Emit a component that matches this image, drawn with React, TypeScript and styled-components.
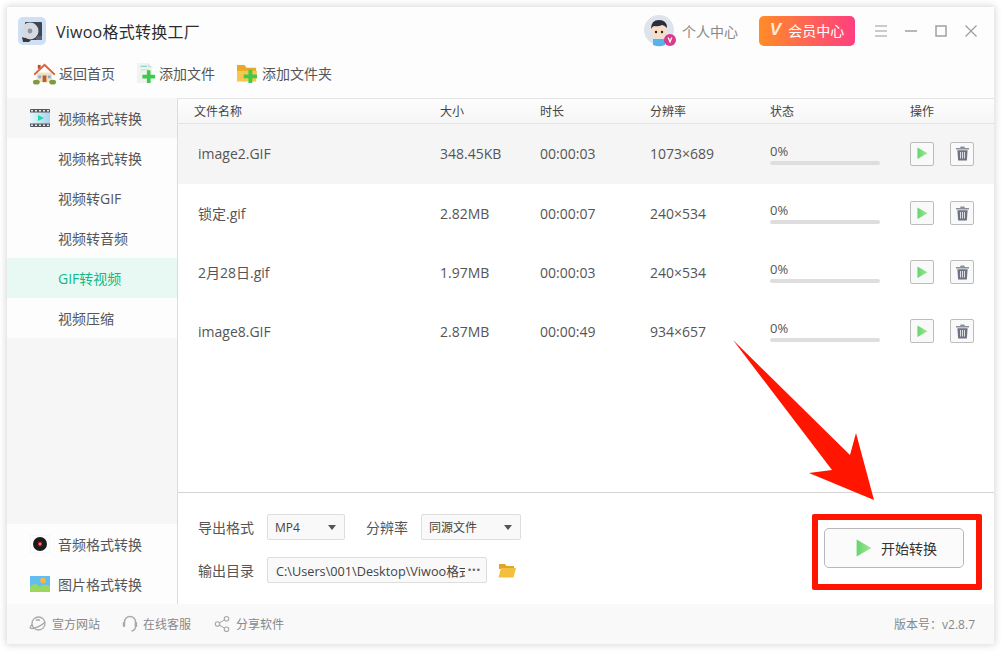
import React from 'react';
import styled, { createGlobalStyle } from 'styled-components';
import { Share2 } from 'lucide-react';

const files = [
    { name: 'image2.GIF', size: '348.45KB', time: '00:00:03', res: '1073×689' },
    { name: '锁定.gif', size: '2.82MB', time: '00:00:07', res: '240×534' },
    { name: '2月28日.gif', size: '1.97MB', time: '00:00:03', res: '240×534' },
    { name: 'image8.GIF', size: '2.87MB', time: '00:00:49', res: '934×657' },
];

const subItems = ['视频格式转换', '视频转GIF', '视频转音频', 'GIF转视频', '视频压缩'];

const Logo = () => (
    <svg width="28" height="28" viewBox="0 0 28 28">
        <rect width="28" height="28" rx="5" fill="#cfe0f5" />
        <rect x="7" y="5" width="17" height="18" rx="1" fill="#3c4654" />
        <circle cx="12" cy="14" r="8.5" fill="#d5d9e0" />
        <circle cx="12" cy="14" r="2.4" fill="#8d96a5" />
        <path d="M4 20l9 3-2 2H5z" fill="#3a3a3a" />
        <path d="M18 19h6v4h-6z" fill="#59616e" />
    </svg>
);

const HomeIcon = () => (
    <svg width="23" height="23" viewBox="0 0 24 24">
        <path d="M5 3h3v4H5z" fill="#c9492b" />
        <path d="M4 11h16v10H4z" fill="#f6dfc0" />
        <path d="M0.5 12.5L12 1.5l11.5 11-1.5 1.4L12 4.5 2 13.9z" fill="#d9663a" />
        <path d="M10 14h4v7h-4z" fill="#b2622c" />
        <path d="M5.5 14h3v3h-3zM15.500 14h3v3h-3z" fill="#7fb3d5" />
        <ellipse cx="3.5" cy="21" rx="3.5" ry="2.4" fill="#7d9b3c" />
        <ellipse cx="20.5" cy="21" rx="3.5" ry="2.4" fill="#7d9b3c" />
    </svg>
);

const GreenPlus = () => (
    <path d="M9 6h4v5h5v4h-5v5H9v-5H4v-4h5z" fill="#3ecb4c" />
);

const AddFileIcon = () => (
    <svg width="20" height="22" viewBox="0 0 22 24">
        <path d="M1 1h12l5 5v17H1z" fill="#f1f3f3" />
        <path d="M13 1l5 5h-5z" fill="#dcdfdf" />
        <path d="M5 4h7v1.2H5z" fill="#5fd8b8" />
        <path d="M5 8h9v1H5z" fill="#cfd4d4" />
        <g transform="translate(3 3)">
            <GreenPlus />
        </g>
    </svg>
);

const AddFolderIcon = () => (
    <svg width="23" height="21" viewBox="0 0 24 22">
        <path d="M1 2h8l2 3h10v14H1z" fill="#e9a825" />
        <path d="M1 8h21l-1 11H1z" fill="#f8c64c" />
        <g transform="translate(4 1)">
            <GreenPlus />
        </g>
    </svg>
);

const FilmIcon = () => (
    <svg width="20" height="18" viewBox="0 0 20 18">
        <defs>
            <linearGradient id="film" x1="0" x2="1" y1="0" y2="0">
                <stop offset="0" stopColor="#e4f6fb" />
                <stop offset="1" stopColor="#a9d3ef" />
            </linearGradient>
        </defs>
        <rect width="20" height="18" fill="#55595c" rx="1" />
        <rect y="3.5" width="20" height="11" fill="url(#film)" />
        <path d="M1 1h2v1.4H1zM5 1h2v1.4H5zM9 1h2v1.4H9zM13 1h2v1.4h-2zM17 1h2v1.4h-2zM1 15.6h2V17H1zM5 15.6h2V17H5zM9 15.6h2V17H9zM13 15.6h2V17h-2zM17 15.6h2V17h-2z" fill="#e8e8e8" />
        <path d="M8 6l6 3-6 3z" fill="#1fd9a0" />
    </svg>
);

const DiscIcon = () => (
    <svg width="20" height="18" viewBox="0 0 20 18">
        <rect width="20" height="18" fill="#fdfdfd" stroke="#f0f0f0" />
        <circle cx="10" cy="9" r="7" fill="#1b1b1b" />
        <circle cx="10" cy="9" r="2.2" fill="#d8232a" />
        <circle cx="10" cy="9" r="0.7" fill="#fff" />
    </svg>
);

const PictureIcon = () => (
    <svg width="20" height="16" viewBox="0 0 20 16">
        <rect width="20" height="16" fill="#62bdf2" />
        <circle cx="13" cy="4.5" r="2.8" fill="#f8b93b" />
        <path d="M0 11q5-6 10 0 3-4 10-1v6H0z" fill="#9bd65f" />
    </svg>
);

const Avatar = () => (
    <svg width="32" height="32" viewBox="0 0 32 32">
        <circle cx="15" cy="15" r="15" fill="#dfe4ea" />
        <path d="M9 24h12v6a15 15 0 0 1-12 0z" fill="#58b4e8" />
        <ellipse cx="15" cy="16" rx="7" ry="7.5" fill="#fbdcc6" />
        <path d="M7 14q0-9 8-9t8 8q-3-3-5-3-4 2-8 1-2 1-3 3z" fill="#2b2d3a" />
        <circle cx="12" cy="17" r="1.2" fill="#222" />
        <circle cx="18" cy="17" r="1.2" fill="#222" />
        <circle cx="26" cy="25" r="6" fill="#d93a8a" />
        <path d="M23.5 22.5l2.5 6 2.5-6h-1.5l-1 3-1-3z" fill="#fff" />
    </svg>
);

const PlayIcon = ({ size }: { size: number }) => (
    <svg width={size} height={size * 1.13} viewBox="0 0 14 16">
        <defs>
            <linearGradient id={`play${size}`} x1="0" x2="1" y1="0" y2="0">
                <stop offset="0" stopColor="#63d56b" />
                <stop offset="1" stopColor="#a3e69a" />
            </linearGradient>
        </defs>
        <path d="M0.5 0.5L13.5 8 0.5 15.5z" fill={`url(#play${size})`} />
    </svg>
);

const TrashIcon = () => (
    <svg width="13" height="15" viewBox="0 0 14 16">
        <path d="M5 0.5h4l.6 1.5H14v1.6H0V2h4.4z" fill="#8a8f9a" />
        <path d="M1.5 4.5h11l-.8 11H2.3z" fill="#6d7384" />
        <path d="M4.4 6.5h1v7h-1zM6.5 6.5h1v7h-1zM8.6 6.5h1v7h-1z" fill="#e8e8ec" />
    </svg>
);

const PlanetIcon = () => (
    <svg width="18" height="18" viewBox="0 0 18 18" fill="none" stroke="#a9a9a9" strokeWidth="1.3">
        <circle cx="9.5" cy="8.5" r="6.5" />
        <path d="M3 9.5c-2 2.500-3 4 0 4 3 0 10-3 12.500-6" />
        <path d="M7 5.500q2-1.500 4 0" />
    </svg>
);

const HeadsetIcon = () => (
    <svg width="16" height="18" viewBox="0 0 16 18" fill="none" stroke="#a9a9a9" strokeWidth="1.4">
        <path d="M2.500 8V7a5.500 5.500 0 0 1 11 0v5q0 3-4 4" />
        <rect x="0.800" y="7" width="2.400" height="5" rx="1" fill="#a9a9a9" stroke="none" />
        <rect x="12.800" y="7" width="2.400" height="5" rx="1" fill="#a9a9a9" stroke="none" />
    </svg>
);

const FolderIcon = () => (
    <svg width="18" height="15" viewBox="0 0 18 15">
        <path d="M1 1h6l1.500 2H16v3H1z" fill="#e3a32a" />
        <path d="M3 5h15l-2.500 9.500H0.500z" fill="#f5bf3e" />
    </svg>
);

const Caret = () => (
    <svg width="8" height="5" viewBox="0 0 8 5">
        <path d="M0 0h8L4 5z" fill="#555" />
    </svg>
);

const App: React.FC = () => {
    return (
        <Page>
            <GlobalStyle />
            <Window>
                <TitleBar>
                    <Logo />
                    <AppName>Viwoo格式转换工厂</AppName>
                    <Account>
                        <Avatar />
                        <span>个人中心</span>
                    </Account>
                    <VipButton>
                        <VMark>V</VMark>
                        会员中心
                    </VipButton>
                    <Controls>
                        <svg width="12" height="12" viewBox="0 0 12 12" stroke="#999" strokeWidth="1.2">
                            <path d="M0 1h12M0 6h12M0 11h12" />
                        </svg>
                        <svg width="12" height="12" viewBox="0 0 12 12" stroke="#999" strokeWidth="1.4">
                            <path d="M0 6h12" />
                        </svg>
                        <svg width="12" height="12" viewBox="0 0 12 12" stroke="#999" strokeWidth="1.4" fill="none">
                            <rect x="1" y="1" width="10" height="10" />
                        </svg>
                        <svg width="12" height="12" viewBox="0 0 12 12" stroke="#999" strokeWidth="1.1">
                            <path d="M0.500 0.500l11 11M11.500 0.500l-11 11" />
                        </svg>
                    </Controls>
                </TitleBar>

                <Toolbar>
                    <ToolItem>
                        <HomeIcon />
                        返回首页
                    </ToolItem>
                    <ToolItem>
                        <AddFileIcon />
                        添加文件
                    </ToolItem>
                    <ToolItem>
                        <AddFolderIcon />
                        添加文件夹
                    </ToolItem>
                </Toolbar>

                <Body>
                    <Sidebar>
                        <GroupHead $tinted>
                            <IconSlot>
                                <FilmIcon />
                            </IconSlot>
                            视频格式转换
                        </GroupHead>
                        {subItems.map(item => (
                            <SubItem key={item} $active={item === 'GIF转视频'}>
                                {item}
                            </SubItem>
                        ))}
                        <SideFill />
                        <GroupHead>
                            <IconSlot>
                                <DiscIcon />
                            </IconSlot>
                            音频格式转换
                        </GroupHead>
                        <GroupHead>
                            <IconSlot>
                                <PictureIcon />
                            </IconSlot>
                            图片格式转换
                        </GroupHead>
                    </Sidebar>

                    <Main>
                        <HeadRow>
                            <HeadCell $first>文件名称</HeadCell>
                            <HeadCell>大小</HeadCell>
                            <HeadCell>时长</HeadCell>
                            <HeadCell>分辨率</HeadCell>
                            <HeadCell>状态</HeadCell>
                            <HeadCell>操作</HeadCell>
                        </HeadRow>
                        <FileList>
                            {files.map((f, i) => (
                                <FileRow key={f.name} $selected={i === 0}>
                                    <NameCell>{f.name}</NameCell>
                                    <span>{f.size}</span>
                                    <span>{f.time}</span>
                                    <span>{f.res}</span>
                                    <Status>
                                        <Percent>0%</Percent>
                                        <Track />
                                    </Status>
                                    <Actions>
                                        <SquareButton>
                                            <PlayIcon size={11} />
                                        </SquareButton>
                                        <SquareButton>
                                            <TrashIcon />
                                        </SquareButton>
                                    </Actions>
                                </FileRow>
                            ))}
                        </FileList>

                        <OutputPanel>
                            <Options>
                                <OptionRow>
                                    <FieldLabel>导出格式</FieldLabel>
                                    <Select $width={78}>
                                        MP4
                                        <Caret />
                                    </Select>
                                    <SecondLabel>分辨率</SecondLabel>
                                    <Select $width={100}>
                                        同源文件
                                        <Caret />
                                    </Select>
                                </OptionRow>
                                <OptionRow>
                                    <FieldLabel>输出目录</FieldLabel>
                                    <PathBox>
                                        <PathText>C:\Users\001\Desktop\Viwoo格式</PathText>
                                        <Dots>•••</Dots>
                                    </PathBox>
                                    <FolderSlot>
                                        <FolderIcon />
                                    </FolderSlot>
                                </OptionRow>
                            </Options>
                            <StartButton>
                                <PlayIcon size={16} />
                                开始转换
                            </StartButton>
                        </OutputPanel>
                    </Main>
                </Body>

                <Footer>
                    <FootLink>
                        <PlanetIcon />
                        宣方网站
                    </FootLink>
                    <FootLink>
                        <HeadsetIcon />
                        在线客服
                    </FootLink>
                    <FootLink>
                        <Share2 size={18} color="#a9a9a9" strokeWidth={1.5} />
                        分享软件
                    </FootLink>
                    <Version>版本号：v2.8.7</Version>
                </Footer>
            </Window>

            <RedFrame />
            <Arrow viewBox="0 0 150 170" width="150" height="170">
                <path d="M1 0L118 115L124 93L142 160L77 133L100 130z" fill="#ff1500" />
            </Arrow>
        </Page>
    );
};

const GlobalStyle = createGlobalStyle`
    html, body {
        margin: 0;
        background: #fff;
    }

    body {
        font-family: "Open Sans", "Noto Sans CJK SC", sans-serif;
        font-size: 14px;
        color: #555;
    }
`;

const Page = styled.div`
    position: relative;
    width: 1002px;
    height: 652px;
    padding: 7px 8px 8px 7px;
    box-sizing: border-box;
    overflow: hidden;
`;

const Window = styled.div`
    width: 100%;
    height: 100%;
    display: flex;
    flex-direction: column;
    background: #fdfdfd;
    box-shadow: 0 0 7px 1px rgba(0, 0, 0, 0.16);
`;

const TitleBar = styled.div`
    height: 45px;
    display: flex;
    align-items: center;
    padding: 2px 17px 0 11px;
    box-sizing: border-box;
`;

const AppName = styled.div`
    margin-left: 10px;
    font-size: 16px;
    letter-spacing: 0.25px;
    color: #2c2c2c;
    flex: 1;
`;

const Account = styled.div`
    display: flex;
    align-items: center;
    gap: 6px;
    color: #888;
`;

const VipButton = styled.div`
    width: 96px;
    height: 30px;
    margin-left: 21px;
    padding-bottom: 2px;
    box-sizing: border-box;
    display: flex;
    align-items: center;
    justify-content: center;
    gap: 7px;
    border-radius: 5px;
    color: #fff;
    background: linear-gradient(90deg, #ff8c27, #ff3f80);
`;

const VMark = styled.span`
    font-family: "Liberation Sans", sans-serif;
    font-weight: 700;
    font-style: italic;
    font-size: 17px;
    line-height: 1;
    color: #fde8d0;
`;

const Controls = styled.div`
    margin-left: 20px;
    display: flex;
    gap: 18px;
`;

const Toolbar = styled.div`
    height: 46px;
    display: flex;
    align-items: center;
    padding: 0 0 4px 26px;
    gap: 21px;
    box-sizing: border-box;
`;

const ToolItem = styled.div`
    display: flex;
    align-items: center;
    gap: 3px;
    color: #555;
`;

const Body = styled.div`
    flex: 1;
    display: flex;
    min-height: 0;
`;

const Sidebar = styled.div`
    width: 170px;
    flex-shrink: 0;
    display: flex;
    flex-direction: column;
`;

const GroupHead = styled.div<{ $tinted?: boolean }>`
    height: 40px;
    flex-shrink: 0;
    display: flex;
    align-items: center;
    color: #555;
    background: ${p => (p.$tinted ? '#f6f6f6' : '#fdfdfd')};
`;

const IconSlot = styled.div`
    width: 51px;
    padding-left: 23px;
    box-sizing: border-box;
    display: flex;
`;

const SubItem = styled.div<{ $active?: boolean }>`
    height: 40px;
    padding-left: 51px;
    display: flex;
    align-items: center;
    color: ${p => (p.$active ? '#12b886' : '#555')};
    background: ${p => (p.$active ? '#e8f8f2' : '#fdfdfd')};
`;

const SideFill = styled.div`
    flex: 1;
    background: #f6f6f6;
`;

const Main = styled.div`
    flex: 1;
    min-width: 0;
    display: flex;
    flex-direction: column;
    background: #fff;
    border-left: 1px solid #dcdcdc;
`;

const columns = '262px 100px 110px 120px 140px 1fr';

const HeadRow = styled.div`
    height: 26px;
    display: grid;
    grid-template-columns: ${columns};
    align-items: center;
    font-size: 12px;
    color: #444;
    box-sizing: border-box;
    border-top: 1px solid #e4e4e4;
    border-bottom: 1px solid #e4e4e4;
    background: linear-gradient(#fdfdfd, #f6f6f6);
`;

const HeadCell = styled.div<{ $first?: boolean }>`
    padding-left: ${p => (p.$first ? '16px' : '0')};
`;

const FileList = styled.div`
    flex: 1;
    display: flex;
    flex-direction: column;
    min-height: 0;
`;

const FileRow = styled.div<{ $selected?: boolean }>`
    height: ${p => (p.$selected ? '60px' : '59px')};
    flex-shrink: 0;
    box-sizing: border-box;
    padding-bottom: 1px;
    display: grid;
    grid-template-columns: ${columns};
    align-items: center;
    color: #555;
    font-size: 14px;
    background: ${p => (p.$selected ? '#f5f5f5' : '#fff')};
`;

const NameCell = styled.span`
    padding-left: 20px;
`;

const Status = styled.div`
    width: 110px;
    display: flex;
    flex-direction: column;
    gap: 2px;
`;

const Percent = styled.span`
    font-size: 13px;
    line-height: 16px;
    color: #555;
`;

const Track = styled.div`
    height: 4px;
    border-radius: 2px;
    background: #dedede;
`;

const Actions = styled.div`
    display: flex;
    gap: 16px;
`;

const SquareButton = styled.div`
    width: 24px;
    height: 24px;
    box-sizing: border-box;
    display: flex;
    align-items: center;
    justify-content: center;
    border: 1px solid #bcbcbc;
    border-radius: 2px;
    background: #f9f9f9;
`;

const OutputPanel = styled.div`
    height: 112px;
    flex-shrink: 0;
    box-sizing: border-box;
    border-top: 1px solid #d4d4d4;
    display: flex;
    justify-content: space-between;
    padding: 21px 30px 0 20px;
`;

const Options = styled.div`
    display: flex;
    flex-direction: column;
    gap: 17px;
`;

const OptionRow = styled.div`
    display: flex;
    align-items: center;
`;

const FieldLabel = styled.span`
    width: 69px;
    color: #555;
`;

const SecondLabel = styled.span`
    margin-left: 21px;
    width: 55px;
    color: #555;
`;

const Select = styled.div<{ $width: number }>`
    width: ${p => p.$width}px;
    height: 26px;
    box-sizing: border-box;
    padding: 0 8px 0 7px;
    display: flex;
    align-items: center;
    justify-content: space-between;
    font-size: 12px;
    color: #444;
    border: 1px solid #ddd;
    border-radius: 2px;
    background: #f9f9f9;
`;

const PathBox = styled.div`
    width: 220px;
    height: 26px;
    box-sizing: border-box;
    padding: 0 4px 0 8px;
    display: flex;
    align-items: center;
    font-size: 12.7px;
    color: #444;
    border: 1px solid #ddd;
    border-radius: 2px;
    background: #f9f9f9;
`;

const PathText = styled.span`
    width: 189px;
    flex-shrink: 0;
    overflow: hidden;
    white-space: nowrap;
`;

const Dots = styled.span`
    font-family: "Liberation Sans", sans-serif;
    font-size: 9px;
    letter-spacing: 1.2px;
    color: #666;
    margin-left: 3px;
`;

const FolderSlot = styled.div`
    margin-left: 11px;
    display: flex;
`;

const StartButton = styled.div`
    width: 140px;
    height: 40px;
    margin-top: 14px;
    padding-left: 5px;
    box-sizing: border-box;
    display: flex;
    align-items: center;
    justify-content: center;
    gap: 9px;
    color: #333;
    border: 1px solid #b8b8b8;
    border-radius: 5px;
    background: #fbfbfb;
`;

const Footer = styled.div`
    height: 40px;
    flex-shrink: 0;
    display: flex;
    align-items: center;
    padding: 0 19px 0 22px;
    font-size: 12px;
    color: #888;
    background: #f9f9f9;
`;

const FootLink = styled.div`
    display: flex;
    align-items: center;
    gap: 5px;
    margin-right: 22px;
`;

const Version = styled.div`
    margin-left: auto;
`;

/* annotations drawn over the screenshot */
const RedFrame = styled.div`
    position: absolute;
    left: 812px;
    top: 514px;
    width: 170px;
    height: 76px;
    box-sizing: border-box;
    border: 6px solid #ff1500;
    border-radius: 2px;
`;

const Arrow = styled.svg`
    position: absolute;
    left: 732px;
    top: 340px;
`;

export default App;
